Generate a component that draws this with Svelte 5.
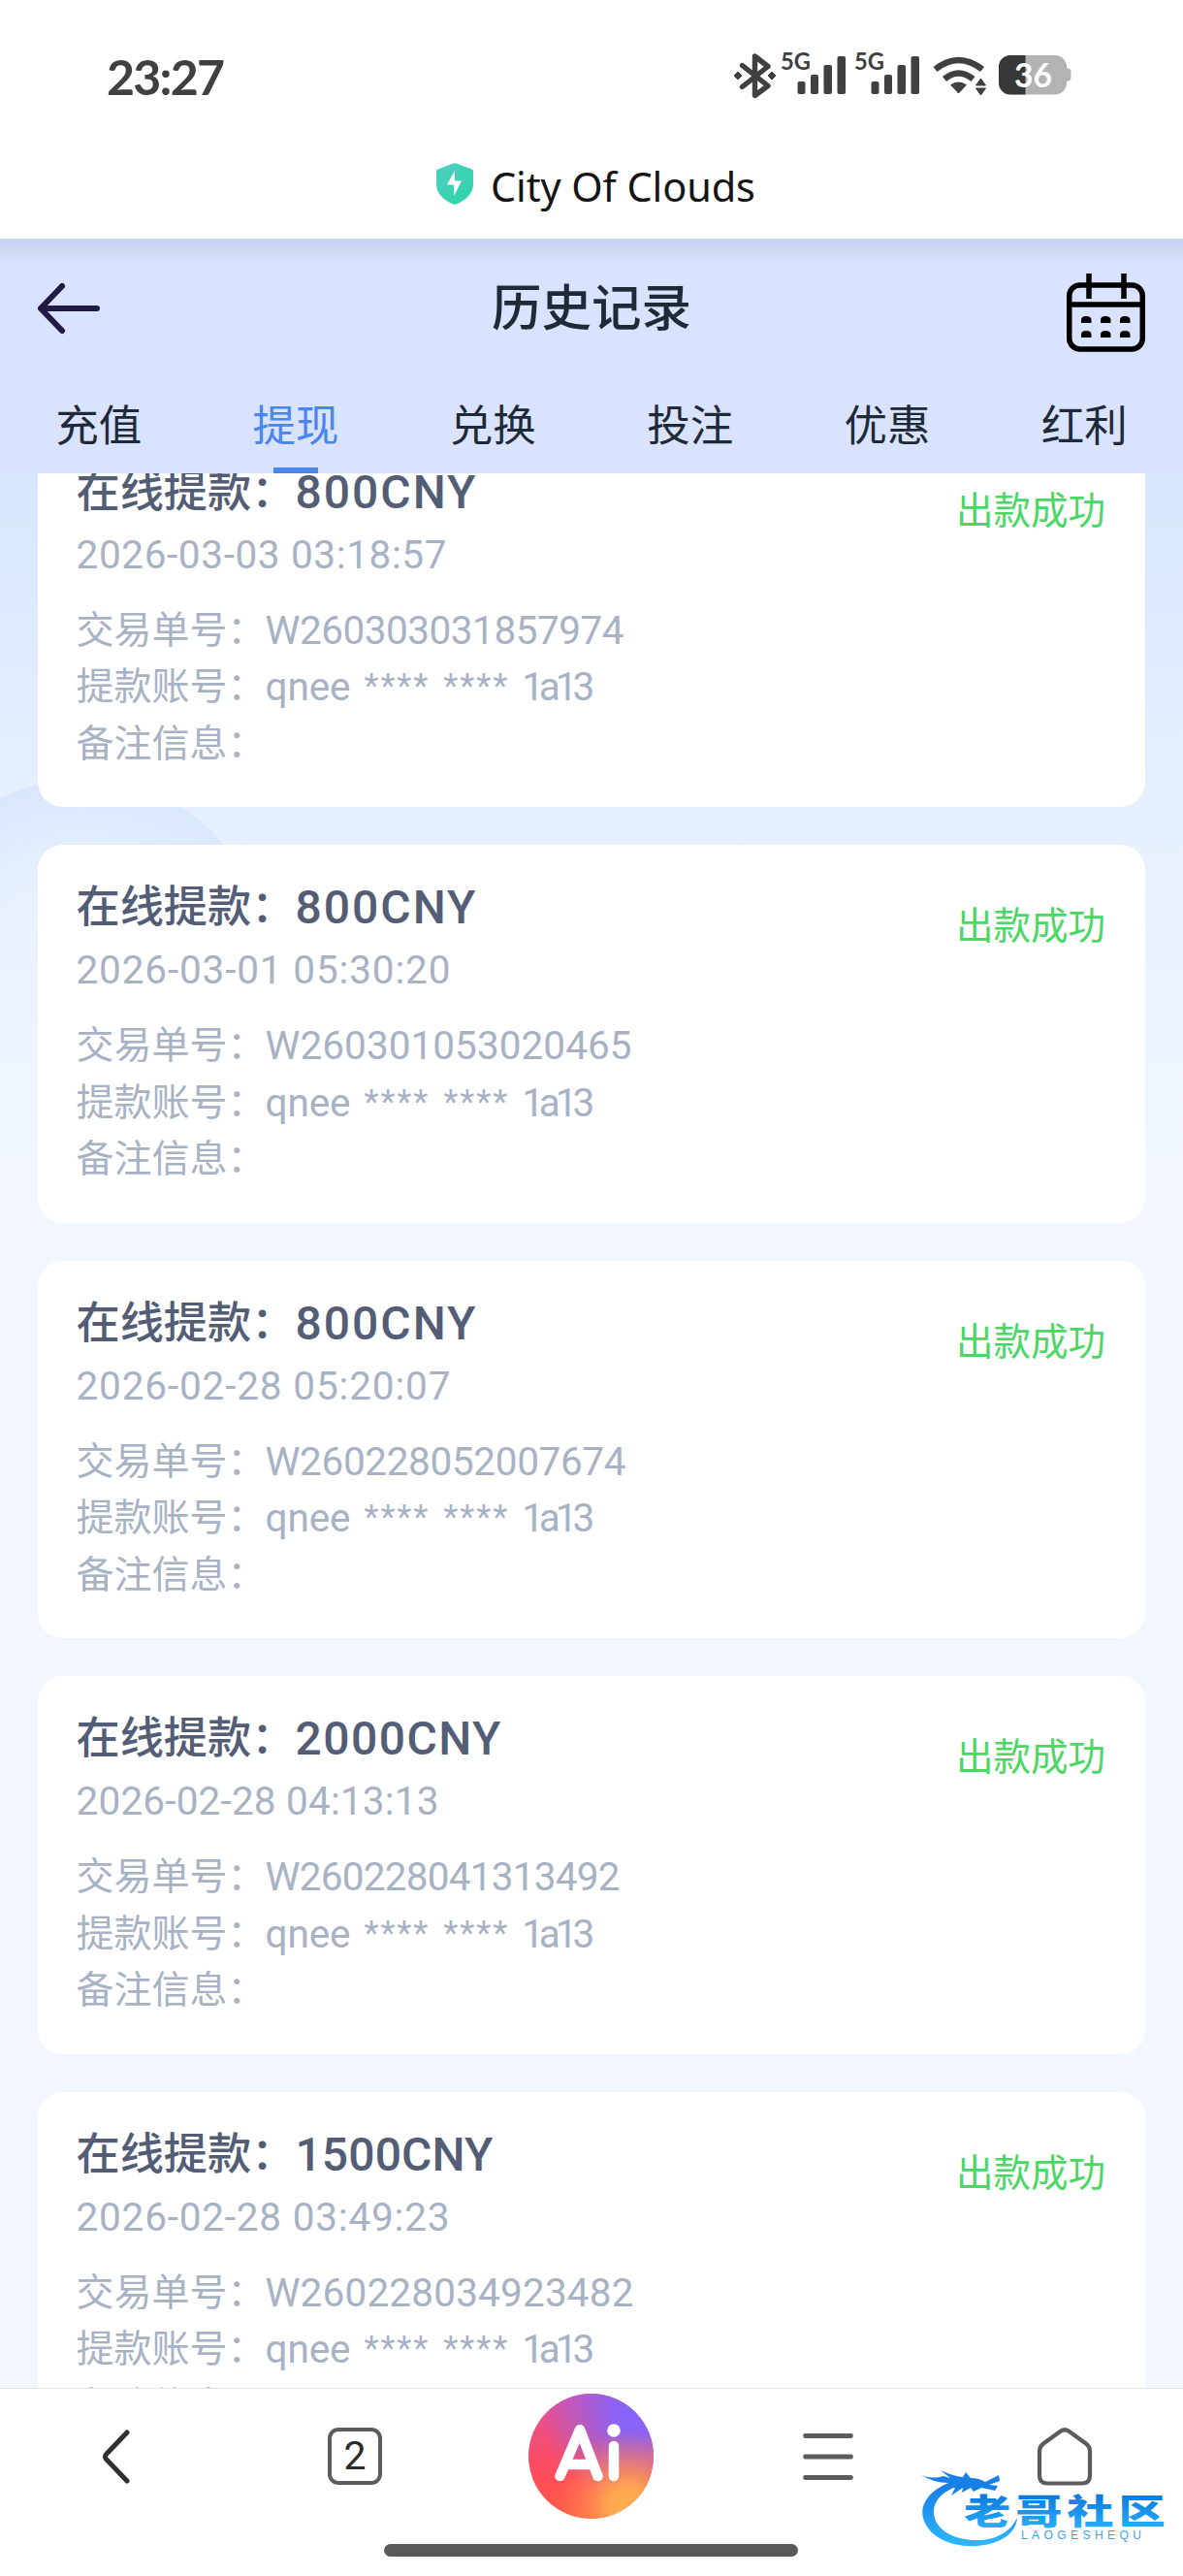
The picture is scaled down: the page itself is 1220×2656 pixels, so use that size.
<script>
  const tabs = ['充值', '提现', '兑换', '投注', '优惠', '红利'];
  const activeTab = '提现';

  const records = [
    { amount: '800CNY', amountWidth: 186, time: '2026-03-03 03:18:57', timeWidth: 382, order: 'W260303031857974', orderWidth: 370 },
    { amount: '800CNY', amountWidth: 186, time: '2026-03-01 05:30:20', timeWidth: 386, order: 'W260301053020465', orderWidth: 378 },
    { amount: '800CNY', amountWidth: 186, time: '2026-02-28 05:20:07', timeWidth: 386, order: 'W260228052007674', orderWidth: 372 },
    { amount: '2000CNY', amountWidth: 212, time: '2026-02-28 04:13:13', timeWidth: 374, order: 'W260228041313492', orderWidth: 366 },
    { amount: '1500CNY', amountWidth: 204, time: '2026-02-28 03:49:23', timeWidth: 385, order: 'W260228034923482', orderWidth: 380 },
  ];

  // Tracks a run of text out (or in) until it spans the given width.
  function fit(node, width) {
    node.style.letterSpacing = '0px';
    const natural = node.getBoundingClientRect().width;
    const gaps = node.textContent.length - 1;
    node.style.letterSpacing = `${(width - natural) / gaps}px`;
  }
</script>

<div class="screen">
  <div class="status-bar">
    <span class="clock" use:fit={122}>23:27</span>
    <svg class="status-icons" viewBox="0 0 350 56" width="350" height="56">
      <g fill="none" stroke="#404040" stroke-width="5.4" stroke-linejoin="round" stroke-linecap="round">
        <path d="M8.500 16.500L35 37.500L21.500 47.500V7L35 17.500L8.500 38.500" />
      </g>
      <path d="M4 23L8 27L4 31L0 27ZM39 23L43 27L39 31L35 27Z" fill="#404040" stroke="#404040" stroke-width="1" stroke-linejoin="round" />
      {#each [48, 124] as x}
        <text class="net" x={x} y="21" textLength="31" lengthAdjust="spacingAndGlyphs">5G</text>
        <g fill="#404040">
          <rect x={x + 17.500} y="33" width="8" height="13" rx="2" />
          <rect x={x + 31} y="26" width="8" height="20" rx="2" />
          <rect x={x + 44.500} y="16" width="8.500" height="30" rx="2" />
          <rect x={x + 58.500} y="7" width="8.500" height="39" rx="2" />
        </g>
      {/each}
      <g fill="none" stroke="#404040" stroke-width="6.500">
        <path d="M207.500 20.500Q231.500 1.500 256 20.500" />
        <path d="M217 30.500Q231.500 18.500 246.500 30.500" />
      </g>
      <path d="M223 36.500Q231.500 30.500 240 36.500L232.500 44.500Q231.500 45.500 230.500 44.500Z" fill="#404040" />
      <path d="M249.500 37L254.500 30L259.500 37ZM249.500 40H259.500L254.500 47Z" fill="#404040" stroke="#404040" stroke-linejoin="round" />
      <clipPath id="charge"><rect x="272" y="4" width="28.500" height="46" /></clipPath>
      <rect x="273" y="6" width="70" height="40.500" rx="12" fill="#b3b3b3" />
      <path d="M343 19Q347.500 19.500 347.500 23V29Q347.500 32.500 343 33Z" fill="#b3b3b3" />
      <rect x="273" y="6" width="70" height="40.500" rx="12" fill="#383838" clip-path="url(#charge)" />
      <text class="level" x="289" y="39" textLength="39" lengthAdjust="spacingAndGlyphs">36</text>
    </svg>
  </div>

  <div class="site-bar">
    <svg viewBox="0 0 38 43" width="38" height="43">
      <defs>
        <linearGradient id="shield" x1="0" y1="0" x2="1" y2="1">
          <stop offset="0" stop-color="#50cfc3" />
          <stop offset="1" stop-color="#2cd3a3" />
        </linearGradient>
      </defs>
      <path d="M17.500 .5Q19 0 20.500 .5L36.500 6.500Q38 7 38 8.500V22C38 32 30 38.500 20.500 42.500Q19 43.200 17.500 42.500C8 38.500 0 32 0 22V8.500Q0 7 1.500 6.500Z" fill="url(#shield)" />
      <path d="M19 8L11 22.500H18.200V34L26 18.500H19Z" fill="#fff" />
    </svg>
    <span class="site" use:fit={273}>City Of Clouds</span>
  </div>

  <header>
    <div class="title-row">
      <svg class="back" viewBox="0 0 66 54" width="66" height="54">
        <path d="M62 27H4M26 4L4 27L26 50" fill="none" stroke="#211b45" stroke-width="6" stroke-linecap="round" stroke-linejoin="round" />
      </svg>
      <h1>历史记录</h1>
      <svg class="calendar" viewBox="0 0 82 82" width="82" height="82">
        <g fill="none" stroke="#000" stroke-width="5.500">
          <rect x="2.750" y="12" width="75.500" height="66" rx="11" />
          <path d="M3 32H78M23 0V26M59 0V26" />
        </g>
        <g fill="#000">
          {#each [15, 35, 55] as x}
            {#each [44, 59] as y}
              <path d="M{x} {y + 7}V{y + 4}Q{x} {y} {x + 5} {y}Q{x + 10.500} {y} {x + 10.500} {y + 4}V{y + 7}Z" />
            {/each}
          {/each}
        </g>
      </svg>
    </div>
    <nav>
      {#each tabs as tab}
        <span class="tab" class:active={tab === activeTab}>{tab}</span>
      {/each}
    </nav>
  </header>

  <main>
    <div class="list">
      {#each records as r}
        <article>
          <div class="details">
            <div class="line amount"><span>在线提款：</span><b use:fit={r.amountWidth}>{r.amount}</b></div>
            <div class="line time"><b use:fit={r.timeWidth}>{r.time}</b></div>
            <div class="line"><span>交易单号：</span><b use:fit={r.orderWidth}>{r.order}</b></div>
            <div class="line">
              <span>提款账号：</span>
              <b class="account">
                <span use:fit={88}>qnee</span>
                <span class="stars" use:fit={67}>****</span>
                <span class="stars" use:fit={67}>****</span>
                <span use:fit={75}>1a13</span>
              </b>
            </div>
            <div class="line"><span>备注信息：</span></div>
          </div>
          <span class="state">出款成功</span>
        </article>
      {/each}
    </div>
  </main>

  <footer>
    <div class="nav-row">
      <div class="cell">
        <svg class="prev" viewBox="0 0 32 60" width="32" height="60">
          <path d="M27 5L5.500 27.500Q3.500 30 5.500 32.500L27 55" fill="none" stroke="#303030" stroke-width="5" stroke-linecap="round" />
        </svg>
      </div>
      <div class="cell"><span class="pages">2</span></div>
      <div class="cell">
        <svg class="ai" viewBox="0 0 129 129" width="129" height="129">
          <defs>
            <radialGradient id="violet" cx=".86" cy=".14" r=".75">
              <stop offset="0" stop-color="#8265ff" />
              <stop offset=".25" stop-color="#8d62f2" />
              <stop offset="1" stop-color="#8d62f2" stop-opacity="0" />
            </radialGradient>
            <radialGradient id="amber" cx=".8" cy=".9" r=".6">
              <stop offset="0" stop-color="#ffb04d" />
              <stop offset=".25" stop-color="#ffa752" />
              <stop offset="1" stop-color="#ff7d50" stop-opacity="0" />
            </radialGradient>
            <linearGradient id="rose" x1="0" y1="0" x2="0" y2="1">
              <stop offset="0" stop-color="#e0509c" />
              <stop offset=".65" stop-color="#ff4c5a" />
              <stop offset="1" stop-color="#ff5b45" />
            </linearGradient>
          </defs>
          <circle cx="64.500" cy="64.500" r="64.500" fill="url(#rose)" />
          <circle cx="64.500" cy="64.500" r="64.500" fill="url(#violet)" />
          <circle cx="64.500" cy="64.500" r="64.500" fill="url(#amber)" />
          <g fill="none" stroke="#fff" stroke-width="10.500" stroke-linecap="round" stroke-linejoin="round">
            <path d="M32.500 85L53 37L71.500 85M40 73H66M88 54V85" />
          </g>
          <circle cx="88" cy="38" r="6.800" fill="#fff" />
        </svg>
      </div>
      <div class="cell">
        <svg viewBox="0 0 52 50" width="52" height="50">
          <path d="M2.500 3.500H49.500M2.500 25H49.500M2.500 46.500H49.500" stroke="#5c5c5c" stroke-width="4.800" stroke-linecap="round" />
        </svg>
      </div>
      <div class="cell">
        <svg viewBox="0 0 56 60" width="56" height="60">
          <path d="M24 3.500Q28 1 32 3.500L50 16.500Q54 19.500 54 24V49.500Q54 57.500 46 57.500H10Q2 57.500 2 49.500V24Q2 19.500 6 16.500Z" fill="none" stroke="#5c5c5c" stroke-width="4.200" stroke-linejoin="round" />
        </svg>
      </div>
    </div>
    <div class="home-indicator"></div>
  </footer>

  <svg class="watermark" viewBox="0 0 270 110" width="270" height="110">
    <defs>
      <linearGradient id="sea" gradientUnits="userSpaceOnUse" x1="0" y1="18" x2="0" y2="96">
        <stop offset="0" stop-color="#1070e0" />
        <stop offset="1" stop-color="#2fb9fc" />
      </linearGradient>
      <linearGradient id="ink" gradientUnits="userSpaceOnUse" x1="0" y1="-31" x2="0" y2="3">
        <stop offset="0" stop-color="#0b78dc" />
        <stop offset="1" stop-color="#27acf7" />
      </linearGradient>
    </defs>
    <path d="M44 28C20 35 8 52 12 66C17 86 42 97 68 95C92 93 108 82 109 66C101 82 85 90 64 89C40 88 23 76 23 60C23 46 36 36 53 32Z" fill="url(#sea)" />
    <path d="M9 21Q19 27 33 23L40 25L30 17Q43 23 53 24L56 19L61 25Q70 25 76 29L90 22L91 28L80 32L89 33L86 38L72 35L64 39L61 35L52 40L53 35L41 43L45 35L34 35L39 30Q22 30 9 21Z" fill="#1680e7" />
    <g transform="translate(54 72.500) scale(1.34 1)">
      <text class="mark" x="0" y="0" textLength="155">老哥社区</text>
    </g>
    <text class="mark-sub" x="113" y="88" textLength="124" lengthAdjust="spacing">LAOGESHEQU</text>
  </svg>
</div>

<style>
  :global(body) {
    margin: 0;
    background: #fff;
  }

  .screen {
    position: relative;
    display: flex;
    flex-direction: column;
    width: 1220px;
    height: 2656px;
    overflow: hidden;
    background: #fff;
    font-family: Roboto, 'Noto Sans CJK SC', sans-serif;
  }

  svg {
    display: block;
    flex: none;
    overflow: visible;
  }

  .status-bar {
    display: flex;
    align-items: center;
    justify-content: space-between;
    box-sizing: border-box;
    height: 140px;
    padding: 18px 113px 0 110px;
  }

  .clock {
    font-family: Lato, sans-serif;
    font-weight: 700;
    font-size: 50px;
    color: #404040;
    white-space: nowrap;
  }

  .net {
    font: 700 25px Lato, sans-serif;
    fill: #404040;
  }

  .level {
    font: 700 35px Lato, sans-serif;
    fill: #fff;
  }

  .site-bar {
    display: flex;
    align-items: center;
    gap: 18px;
    box-sizing: border-box;
    height: 106px;
    padding: 0 0 7px 450px;
  }

  .site {
    margin-top: 5px;
    font-family: 'Noto Sans', sans-serif;
    font-size: 41.500px;
    line-height: 56px;
    color: #151515;
    white-space: nowrap;
  }

  header {
    flex: none;
    box-sizing: border-box;
    height: 242px;
    border-top: 1px solid #cfd4e4;
    background: linear-gradient(#c8d1ed 0, #d0daf5 14px, #d5dffb 21px, #d9e2ff 22px);
  }

  .title-row {
    display: grid;
    grid-template-columns: 82px 1fr 82px;
    align-items: center;
    height: 141px;
    padding: 0 38px 0 38px;
  }

  .calendar {
    margin-top: 11px;
  }

  h1 {
    margin: 3px 0 0;
    font-size: 51.500px;
    font-weight: 500;
    line-height: 70px;
    text-align: center;
    color: #1f2a37;
  }

  nav {
    display: grid;
    grid-template-columns: repeat(6, 1fr);
    height: 100px;
  }

  .tab {
    display: flex;
    flex-direction: column;
    align-items: center;
    justify-content: space-between;
    padding-top: 19px;
    font-size: 44.500px;
    line-height: 66px;
    color: #1f2a37;
  }

  .tab.active {
    color: #4a86ee;
  }

  .tab.active::after {
    content: '';
    width: 46px;
    height: 6px;
    background: #4a86ee;
  }

  main {
    flex: 1;
    min-height: 0;
    overflow: hidden;
    background:
      radial-gradient(circle at 85px 207px, rgba(205, 224, 252, 0) 90px, rgba(205, 224, 252, 0.5) 191px, rgba(205, 224, 252, 0) 192.500px) 0 300px / 300px 207px no-repeat,
      linear-gradient(#d7e7fd 0, #e1ecfe 220px, #e7f0fe 370px, #edf3fe 560px, #f2f7ff 780px, #f2f7ff 1974px);
  }

  .list {
    display: flex;
    flex-direction: column;
    gap: 39px;
    margin-top: -45.500px;
    padding: 0 39px;
  }

  article {
    display: flex;
    flex: none;
    justify-content: space-between;
    box-sizing: border-box;
    height: 389.500px;
    padding: 33px 41px 0 39.500px;
    border-radius: 26px;
    background: #fff;
  }

  .line {
    display: flex;
    align-items: center;
    height: 58.500px;
    font-size: 39px;
    line-height: 58px;
    color: #a7b2c4;
    white-space: nowrap;
  }

  .line b {
    font-size: 40.500px;
    font-weight: 400;
  }

  .line.amount {
    height: 64px;
    font-size: 45.200px;
    font-weight: 500;
    color: #535d75;
  }

  .line.amount b {
    font-size: 48px;
    font-weight: 500;
  }

  .line.time {
    height: 64px;
    margin-bottom: 17px;
  }

  .line .account {
    display: flex;
    align-items: center;
    gap: 13px;
  }

  .stars {
    padding-left: 1px;
    font-size: 35px;
    line-height: 54px;
  }

  .state {
    margin-top: 22px;
    font-size: 38.500px;
    line-height: 58px;
    color: #4bd763;
    white-space: nowrap;
  }

  footer {
    display: flex;
    flex: none;
    flex-direction: column;
    align-items: center;
    box-sizing: border-box;
    height: 194px;
    border-top: 1px solid #e2e3e5;
    background: #fff;
  }

  .nav-row {
    display: grid;
    grid-template-columns: repeat(5, 244px);
    width: 1220px;
    height: 139px;
    margin-bottom: 21px;
  }

  .cell {
    display: flex;
    align-items: center;
    justify-content: center;
  }

  .prev {
    margin-right: 4px;
  }

  .ai {
    margin-right: 1px;
  }

  .pages {
    box-sizing: border-box;
    width: 56px;
    height: 59px;
    border: 4px solid #5c5c5c;
    border-radius: 11px;
    font-size: 41px;
    line-height: 51px;
    text-align: center;
    color: #2b2b2b;
  }

  .home-indicator {
    width: 427px;
    height: 13px;
    margin-right: 1px;
    border-radius: 7px;
    background: #5a5a5a;
  }

  .watermark {
    position: absolute;
    left: 940px;
    top: 2530px;
  }

  .mark {
    font: 900 36px 'Noto Sans CJK SC', sans-serif;
    fill: url(#ink);
  }

  .mark-sub {
    font: 400 12px 'Liberation Sans', sans-serif;
    fill: #3a9fee;
  }
</style>
